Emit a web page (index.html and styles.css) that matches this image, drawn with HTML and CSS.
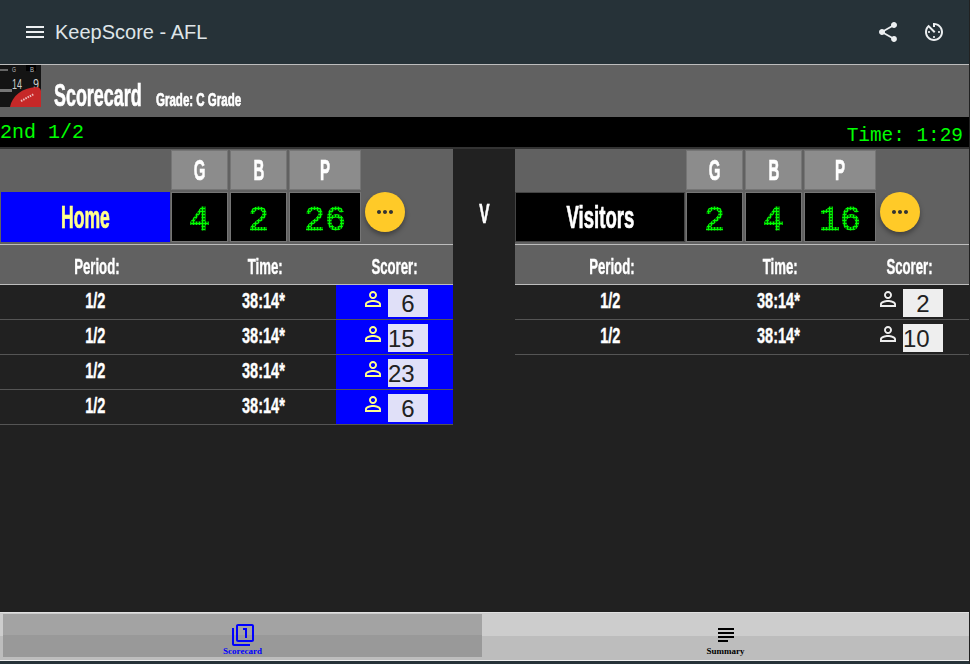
FILE: index.html
```html
<!DOCTYPE html>
<html>
<head>
  <meta charset="UTF-8">
  <title>KeepScore - AFL</title>
  <link rel="stylesheet" href="styles.css">
</head>
<body>
  <svg class="defs" width="0" height="0">
    <symbol id="i-person" viewBox="0 0 24 24"><path d="M12 5.9c1.16 0 2.1.94 2.1 2.1s-.94 2.1-2.1 2.1S9.9 9.16 9.9 8s.94-2.1 2.1-2.1m0 9c2.97 0 6.1 1.46 6.1 2.1v1.1H5.9V17c0-.64 3.13-2.1 6.1-2.1M12 4C9.79 4 8 5.79 8 8s1.79 4 4 4 4-1.79 4-4-1.79-4-4-4zm0 9c-2.67 0-8 1.34-8 4v3h16v-3c0-2.66-5.33-4-8-4z"/></symbol>
    <symbol id="i-more" viewBox="0 0 24 24"><path d="M6 10c-1.1 0-2 .9-2 2s.9 2 2 2 2-.9 2-2-.9-2-2-2zm12 0c-1.1 0-2 .9-2 2s.9 2 2 2 2-.9 2-2-.9-2-2-2zm-6 0c-1.1 0-2 .9-2 2s.9 2 2 2 2-.9 2-2-.9-2-2-2z"/></symbol>
  </svg>

  <header class="toolbar">
    <svg class="tool-icon" viewBox="0 0 24 24"><path d="M3 18h18v-2H3v2zm0-5h18v-2H3v2zm0-7v2h18V6H3z"/></svg>
    <div class="app-title">KeepScore - AFL</div>
    <svg class="tool-icon share" viewBox="0 0 24 24"><path d="M18 16.08c-.76 0-1.44.3-1.96.77L8.91 12.7c.05-.23.09-.46.09-.7s-.04-.47-.09-.7l7.05-4.11c.54.5 1.25.81 2.04.81 1.66 0 3-1.34 3-3s-1.34-3-3-3-3 1.34-3 3c0 .24.04.47.09.7L8.04 9.81C7.5 9.31 6.79 9 6 9c-1.66 0-3 1.34-3 3s1.34 3 3 3c.79 0 1.5-.31 2.04-.81l7.12 4.16c-.05.21-.08.43-.08.65 0 1.61 1.31 2.92 2.92 2.92 1.61 0 2.92-1.31 2.92-2.92s-1.31-2.92-2.92-2.92z"/></svg>
    <svg class="tool-icon timer" viewBox="0 0 24 24"><path d="M11 17c0 .55.45 1 1 1s1-.45 1-1-.45-1-1-1-1 .45-1 1zm0-14v4h2V5.08c3.39.49 6 3.39 6 6.92 0 3.87-3.13 7-7 7s-7-3.13-7-7c0-1.68.59-3.22 1.58-4.42L12 13l1.41-1.41-6.8-6.8v.02C4.42 6.45 3 9.05 3 12c0 4.97 4.02 9 9 9 4.97 0 9-4.03 9-9s-4.03-9-9-9h-1zm7 9c0-.55-.45-1-1-1s-1 .45-1 1 .45 1 1 1 1-.45 1-1zM6 12c0 .55.45 1 1 1s1-.45 1-1-.45-1-1-1-1 .45-1 1z"/></svg>
  </header>

  <section class="title-bar">
    <svg class="logo" viewBox="0 0 41 42">
      <rect width="41" height="42" fill="#141414"/>
      <rect x="0" y="4" width="8" height="2" fill="#666"/>
      <rect x="0" y="24" width="12" height="3" fill="#777"/>
      <rect x="26" y="0" width="10" height="6" fill="#000"/>
      <text x="12" y="7" class="logo-text" textLength="4" lengthAdjust="spacingAndGlyphs">G</text>
      <text x="30" y="7" class="logo-text" textLength="4" lengthAdjust="spacingAndGlyphs">B</text>
      <text x="12" y="24" class="logo-num" textLength="10" lengthAdjust="spacingAndGlyphs">14</text>
      <text x="33" y="24" class="logo-num" textLength="6" lengthAdjust="spacingAndGlyphs">9</text>
      <path d="M10 42 C12 31 22 23 36 22 C39 22 41 24 41 26 L41 42 Z" fill="#c62828"/>
      <path d="M21 36 L34 29" stroke="#eebbbb" stroke-width="2" stroke-dasharray="1.5 1"/>
    </svg>
    <span class="card-title">Scorecard</span>
    <span class="card-grade">Grade: C Grade</span>
  </section>

  <section class="clock-bar">
    <span class="period">2nd 1/2</span>
    <span class="clock">Time: 1:29</span>
  </section>

  <main class="teams">
    <div class="team">
      <div class="score-grid">
        <div class="score-head col-g"><span>G</span></div>
        <div class="score-head"><span>B</span></div>
        <div class="score-head"><span>P</span></div>
        <div class="team-name home"><span>Home</span></div>
        <div class="score-val"><span>4</span></div>
        <div class="score-val"><span>2</span></div>
        <div class="score-val"><span>26</span></div>
        <button class="fab"><svg viewBox="0 0 24 24"><use href="#i-more"/></svg></button>
      </div>
      <div class="row head-row">
        <div><span>Period:</span></div><div><span>Time:</span></div><div><span>Scorer:</span></div>
      </div>
      <div class="row">
        <div><span>1/2</span></div><div><span>38:14*</span></div>
        <div class="scorer home-scorer"><svg viewBox="0 0 24 24"><use href="#i-person"/></svg><span class="num center">6</span></div>
      </div>
      <div class="row">
        <div><span>1/2</span></div><div><span>38:14*</span></div>
        <div class="scorer home-scorer"><svg viewBox="0 0 24 24"><use href="#i-person"/></svg><span class="num">15</span></div>
      </div>
      <div class="row">
        <div><span>1/2</span></div><div><span>38:14*</span></div>
        <div class="scorer home-scorer"><svg viewBox="0 0 24 24"><use href="#i-person"/></svg><span class="num">23</span></div>
      </div>
      <div class="row">
        <div><span>1/2</span></div><div><span>38:14*</span></div>
        <div class="scorer home-scorer"><svg viewBox="0 0 24 24"><use href="#i-person"/></svg><span class="num center">6</span></div>
      </div>
    </div>

    <div class="versus"><span>V</span></div>

    <div class="team">
      <div class="score-grid">
        <div class="score-head col-g"><span>G</span></div>
        <div class="score-head"><span>B</span></div>
        <div class="score-head"><span>P</span></div>
        <div class="team-name visitors"><span>Visitors</span></div>
        <div class="score-val"><span>2</span></div>
        <div class="score-val"><span>4</span></div>
        <div class="score-val"><span>16</span></div>
        <button class="fab"><svg viewBox="0 0 24 24"><use href="#i-more"/></svg></button>
      </div>
      <div class="row head-row">
        <div><span>Period:</span></div><div><span>Time:</span></div><div><span>Scorer:</span></div>
      </div>
      <div class="row">
        <div><span>1/2</span></div><div><span>38:14*</span></div>
        <div class="scorer"><svg viewBox="0 0 24 24"><use href="#i-person"/></svg><span class="num center">2</span></div>
      </div>
      <div class="row">
        <div><span>1/2</span></div><div><span>38:14*</span></div>
        <div class="scorer"><svg viewBox="0 0 24 24"><use href="#i-person"/></svg><span class="num">10</span></div>
      </div>
    </div>
  </main>

  <nav class="tabs">
    <div class="tab active">
      <svg viewBox="0 0 24 24"><path d="M3 5H1v16c0 1.1.9 2 2 2h16v-2H3V5zm11 10h2V5h-4v2h2v8zm7-14H7c-1.1 0-2 .9-2 2v14c0 1.1.9 2 2 2h14c1.1 0 2-.9 2-2V3c0-1.1-.9-2-2-2zm0 16H7V3h14v14z"/></svg>
      <span>Scorecard</span>
    </div>
    <div class="tab">
      <svg viewBox="0 0 24 24"><path d="M14 17H4v2h10v-2zm6-8H4v2h16V9zM4 15h16v-2H4v2zM4 5v2h16V5H4z"/></svg>
      <span>Summary</span>
    </div>
  </nav>
  <div class="foot"></div>
</body>
</html>
```

FILE: styles.css
```css
* {
  box-sizing: border-box;
}

html, body {
  margin: 0;
  height: 100%;
}

body {
  width: 969px;
  height: 664px;
  overflow: hidden;
  display: flex;
  flex-direction: column;
  background: #212121;
  color: #fff;
  font-family: "Liberation Sans", Arial, sans-serif;
}

.defs {
  display: none;
}

/* top bar */
.toolbar {
  height: 65px;
  flex: none;
  display: flex;
  align-items: center;
  padding: 0 23px;
  background: #263238;
  border-bottom: 1px solid #bdbdbd;
}

.tool-icon {
  width: 24px;
  height: 24px;
  fill: #eceff1;
}

.app-title {
  flex: 1;
  margin-left: 8px;
  font-size: 20px;
  color: #dfe5e8;
}

.timer {
  margin-left: 22px;
}

/* scorecard title */
.title-bar {
  height: 52px;
  flex: none;
  display: flex;
  align-items: flex-start;
  background: #616161;
}

.logo {
  width: 41px;
  height: 42px;
  flex: none;
}

.logo-text {
  font-family: "Liberation Sans", sans-serif;
  font-size: 7px;
  fill: #bbb;
}

.logo-num {
  font-family: "Liberation Sans", sans-serif;
  font-size: 15px;
  fill: #ccc;
}

/* the display face is not installed, so bold Liberation Sans is squeezed */
.card-title, .card-grade, .score-head, .team-name, .versus, .row {
  font-family: "Liberation Sans", sans-serif;
  font-weight: 700;
  -webkit-text-stroke: .7px currentColor;
}

.card-title, .card-grade {
  white-space: nowrap;
  transform-origin: left center;
}

.card-title {
  width: 88px;
  margin: 13px 0 0 13px;
  font-size: 32px;
  line-height: 34px;
  transform: scaleX(.56);
}

.card-grade {
  margin: 23px 0 0 14px;
  font-size: 18px;
  line-height: 24px;
  transform: scaleX(.64);
}

.score-head span, .team-name span, .versus span, .row div > span:not(.num) {
  display: inline-block;
}

/* clock */
.clock-bar {
  height: 32px;
  flex: none;
  display: flex;
  justify-content: space-between;
  background: #000;
  border-bottom: 2px solid #333;
  padding: 0 6px 0 0;
  color: #00ff00;
  font-family: "Liberation Mono", monospace;
}

.period {
  margin-top: 4px;
  font-size: 20px;
}

.clock {
  margin-top: 8px;
  font-size: 19.4px;
}

/* teams */
.teams {
  flex: 1;
  display: grid;
  grid-template-columns: 453px 62px 454px;
  align-items: start;
}

.score-grid {
  display: grid;
  grid-template-columns: 171px 59px 59px 74px 1fr;
  grid-template-rows: 42px 53px;
  height: 96px;
  background: #616161;
  border-bottom: 1px solid #bdbdbd;
}

.score-head {
  margin: 1px 2px 1px 0;
  display: flex;
  align-items: center;
  justify-content: center;
  background: #8c8c8c;
  border: 1px solid #757575;
  font-size: 30px;
}

.score-head span {
  transform: scaleX(.5);
}

.col-g {
  grid-column: 2;
}

.team-name {
  margin: 1px 1px 1px 0;
  display: flex;
  align-items: center;
  justify-content: center;
  font-size: 32px;
  grid-column: 1;
  height: 50px;
}

.home span {
  transform: scaleX(.55);
}

.visitors span {
  transform: scaleX(.58);
}

.home {
  background: #0000ff;
  color: #ffff8d;
  margin-left: 1px;
}

.visitors {
  background: #000;
  border: 1px solid #444;
}

.score-val {
  height: 50px;
  margin: 1px 2px 1px 0;
  display: flex;
  align-items: center;
  justify-content: center;
  background: #000;
  border: 1px solid #757575;
  color: #00ff00;
  font-family: "Liberation Mono", monospace;
  font-size: 35px;
}

/* dot matrix look, the text stays real text */
.score-val span {
  margin-top: 8px;
  line-height: 40px;
  -webkit-text-stroke: .9px currentColor;
  -webkit-mask-image: radial-gradient(circle, #000 1.2px, transparent 1.6px);
  mask-image: radial-gradient(circle, #000 1.2px, transparent 1.6px);
  -webkit-mask-size: 3px 3px;
  mask-size: 3px 3px;
}

.fab {
  width: 40px;
  height: 40px;
  margin: 1px 0 0 2px;
  align-self: start;
  padding: 8px;
  border: 0;
  border-radius: 50%;
  background: #ffca28;
  box-shadow: 0 3px 5px rgba(0, 0, 0, .35);
}

.fab svg {
  display: block;
  width: 24px;
  height: 24px;
  fill: #333;
}

.row {
  display: grid;
  grid-template-columns: 190px 146px 117px;
  height: 35px;
  align-items: center;
  text-align: center;
  border-bottom: 1px solid #555;
  font-size: 22px;
  -webkit-text-stroke: .4px currentColor;
}

.row div > span:not(.num) {
  transform: translateY(-1px) scaleX(.66);
}

.head-row {
  grid-template-columns: 194px 142px 117px;
  height: 40px;
  padding-top: 5px;
  background: #616161;
  border-bottom: 1px solid #bdbdbd;
}

.head-row div > span:not(.num) {
  transform: scaleX(.6);
}

.scorer {
  height: 34px;
  display: flex;
  align-items: center;
  justify-content: center;
  gap: 3px;
  -webkit-text-stroke: 0;
}

.scorer svg {
  width: 24px;
  height: 24px;
  margin-top: -6px;
  fill: #eee;
}

.home-scorer {
  background: #0000ff;
}

.home-scorer svg {
  fill: #ffff8d;
}

.num {
  width: 40px;
  height: 28px;
  margin-top: 2px;
  background: #eee;
  color: #212121;
  font-family: "Liberation Sans", sans-serif;
  font-weight: 400;
  font-size: 24px;
  line-height: 30px;
  text-align: left;
}

.home-scorer .num {
  background: #e0e0f8;
}

.num.center {
  text-align: center;
}

.versus {
  margin-top: 49px;
  text-align: center;
  font-size: 28px;
}

.versus span {
  transform: scaleX(.55);
}

/* bottom tabs */
.tabs {
  height: 49px;
  flex: none;
  display: grid;
  grid-template-columns: 479px 1fr;
  padding: 1px 0 3px 3px;
  border-top: 1px solid #e0e0e0;
  border-bottom: 1px solid #eee;
  background: linear-gradient(#cdcdcd, #cdcdcd 50%, #bdbdbd 50%, #bdbdbd);
}

.tab {
  display: flex;
  flex-direction: column;
  align-items: center;
  justify-content: flex-end;
  color: #000;
  font-family: "Liberation Serif", serif;
  font-weight: 700;
  font-size: 9px;
  line-height: 9px;
  padding-bottom: 1px;
}

.tab svg {
  width: 24px;
  height: 24px;
  fill: #000;
}

.tab.active {
  color: #0000ff;
  background: linear-gradient(#a3a3a3, #a3a3a3 50%, #999 50%, #999);
}

.tab.active svg {
  fill: #0000ff;
}

.foot {
  height: 3px;
  flex: none;
  background: #263238;
}
```
